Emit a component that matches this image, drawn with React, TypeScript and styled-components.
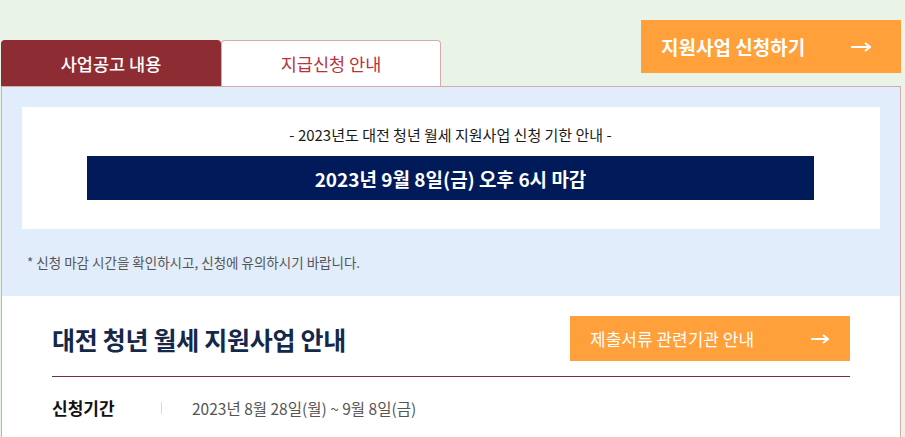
import React from "react";
import styled, { createGlobalStyle } from "styled-components";

const Global = createGlobalStyle`
  html, body { margin: 0; padding: 0; }
  body {
    background: #eaf3e8;
    font-family: "Noto Sans CJK KR", "Noto Sans", sans-serif;
    color: #222;
  }
`;

const Page = styled.div`
  width: 900px;
  margin-left: 1px;
`;

const Header = styled.div`
  height: 86px;
  display: flex;
  justify-content: space-between;
  align-items: flex-start;
`;

const Tabs = styled.div`
  display: flex;
  align-self: flex-end;
`;

const Tab = styled.div<{ $active?: boolean }>`
  width: 220px;
  height: 46px;
  box-sizing: border-box;
  display: flex;
  align-items: center;
  justify-content: center;
  border-radius: 4px 4px 0 0;
  font-size: 17.5px;
  background: ${(p) => (p.$active ? "#8e2c33" : "#ffffff")};
  color: ${(p) => (p.$active ? "#ffffff" : "#b8323f")};
  border: ${(p) => (p.$active ? "none" : "1px solid #d6aaad")};
  border-bottom: none;
  font-weight: ${(p) => (p.$active ? 500 : 400)};
`;

const OrangeButton = styled.a<{ $big?: boolean }>`
  display: flex;
  align-items: center;
  justify-content: space-between;
  box-sizing: border-box;
  background: #ffa03a;
  color: #fff;
  text-decoration: none;
  width: ${(p) => (p.$big ? "260px" : "280px")};
  height: ${(p) => (p.$big ? "53px" : "45px")};
  margin-top: ${(p) => (p.$big ? "20px" : "0")};
  padding: ${(p) => (p.$big ? "0 30px 0 20px" : "0 21px 0 20px")};
  font-size: ${(p) => (p.$big ? "19px" : "17px")};
  font-weight: ${(p) => (p.$big ? 700 : 400)};
`;

const Panel = styled.div`
  border: 1px solid #d3abae;
  border-bottom: none;
  background: #fff;
`;

const NoticeArea = styled.div`
  background: #e1edfb;
  padding: 20px 20px 0 20px;
  height: 209px;
  box-sizing: border-box;
`;

const NoticeBox = styled.div`
  background: #fff;
  height: 122px;
  box-sizing: border-box;
  padding: 18px 66px 0 65px;
  display: flex;
  flex-direction: column;
  align-items: stretch;
`;

const NoticeTitle = styled.div`
  text-align: center;
  font-size: 15px;
  line-height: 20px;
  color: #1a1a1a;
`;

const Deadline = styled.div`
  margin-top: 11px;
  height: 44px;
  background: #001a5a;
  color: #fff;
  font-size: 19px;
  font-weight: 700;
  display: flex;
  align-items: center;
  justify-content: center;
`;

const Note = styled.p`
  margin: 24px 0 0 5px;
  font-size: 13.5px;
  line-height: 18px;
  color: #555;
`;

const InfoSection = styled.div`
  padding: 20px 50px 17px 50px;
`;

const TitleRow = styled.div`
  display: flex;
  justify-content: space-between;
  align-items: center;
  padding-bottom: 15px;
  border-bottom: 1px solid #7b2d35;
`;

const Title = styled.h2`
  margin: 0;
  font-size: 25px;
  font-weight: 700;
  color: #14284a;
  letter-spacing: -0.3px;
`;

const InfoRow = styled.div`
  display: flex;
  align-items: center;
  padding-top: 18px;
`;

const Label = styled.div`
  width: 109px;
  font-size: 17px;
  font-weight: 700;
  color: #111;
`;

const Divider = styled.span`
  width: 1px;
  height: 12px;
  background: #d8d8d8;
  margin-right: 30px;
`;

const Value = styled.div`
  font-size: 15.5px;
  color: #555;
`;

const Arrow = ({ w = 20 }: { w?: number }) => (
  <svg width={w} height="10" viewBox={`0 0 ${w} 10`} fill="none">
    <path d={`M0 5H${w - 1}`} stroke="#fff" strokeWidth="2" />
    <path d={`M${w - 6} 1L${w - 1} 5L${w - 6} 9`} stroke="#fff" strokeWidth="2" />
  </svg>
);

export default function App() {
  return (
    <>
      <Global />
      <Page>
        <Header>
          <Tabs>
            <Tab $active>사업공고 내용</Tab>
            <Tab>지급신청 안내</Tab>
          </Tabs>
          <OrangeButton $big href="#">
            <span>지원사업 신청하기</span>
            <Arrow w={20} />
          </OrangeButton>
        </Header>
        <Panel>
          <NoticeArea>
            <NoticeBox>
              <NoticeTitle>- 2023년도 대전 청년 월세 지원사업 신청 기한 안내 -</NoticeTitle>
              <Deadline>2023년 9월 8일(금) 오후 6시 마감</Deadline>
            </NoticeBox>
            <Note>* 신청 마감 시간을 확인하시고, 신청에 유의하시기 바랍니다.</Note>
          </NoticeArea>
          <InfoSection>
            <TitleRow>
              <Title>대전 청년 월세 지원사업 안내</Title>
              <OrangeButton href="#">
                <span>제출서류 관련기관 안내</span>
                <Arrow w={18} />
              </OrangeButton>
            </TitleRow>
            <InfoRow>
              <Label>신청기간</Label>
              <Divider />
              <Value>2023년 8월 28일(월) ~ 9월 8일(금)</Value>
            </InfoRow>
          </InfoSection>
        </Panel>
      </Page>
    </>
  );
}
